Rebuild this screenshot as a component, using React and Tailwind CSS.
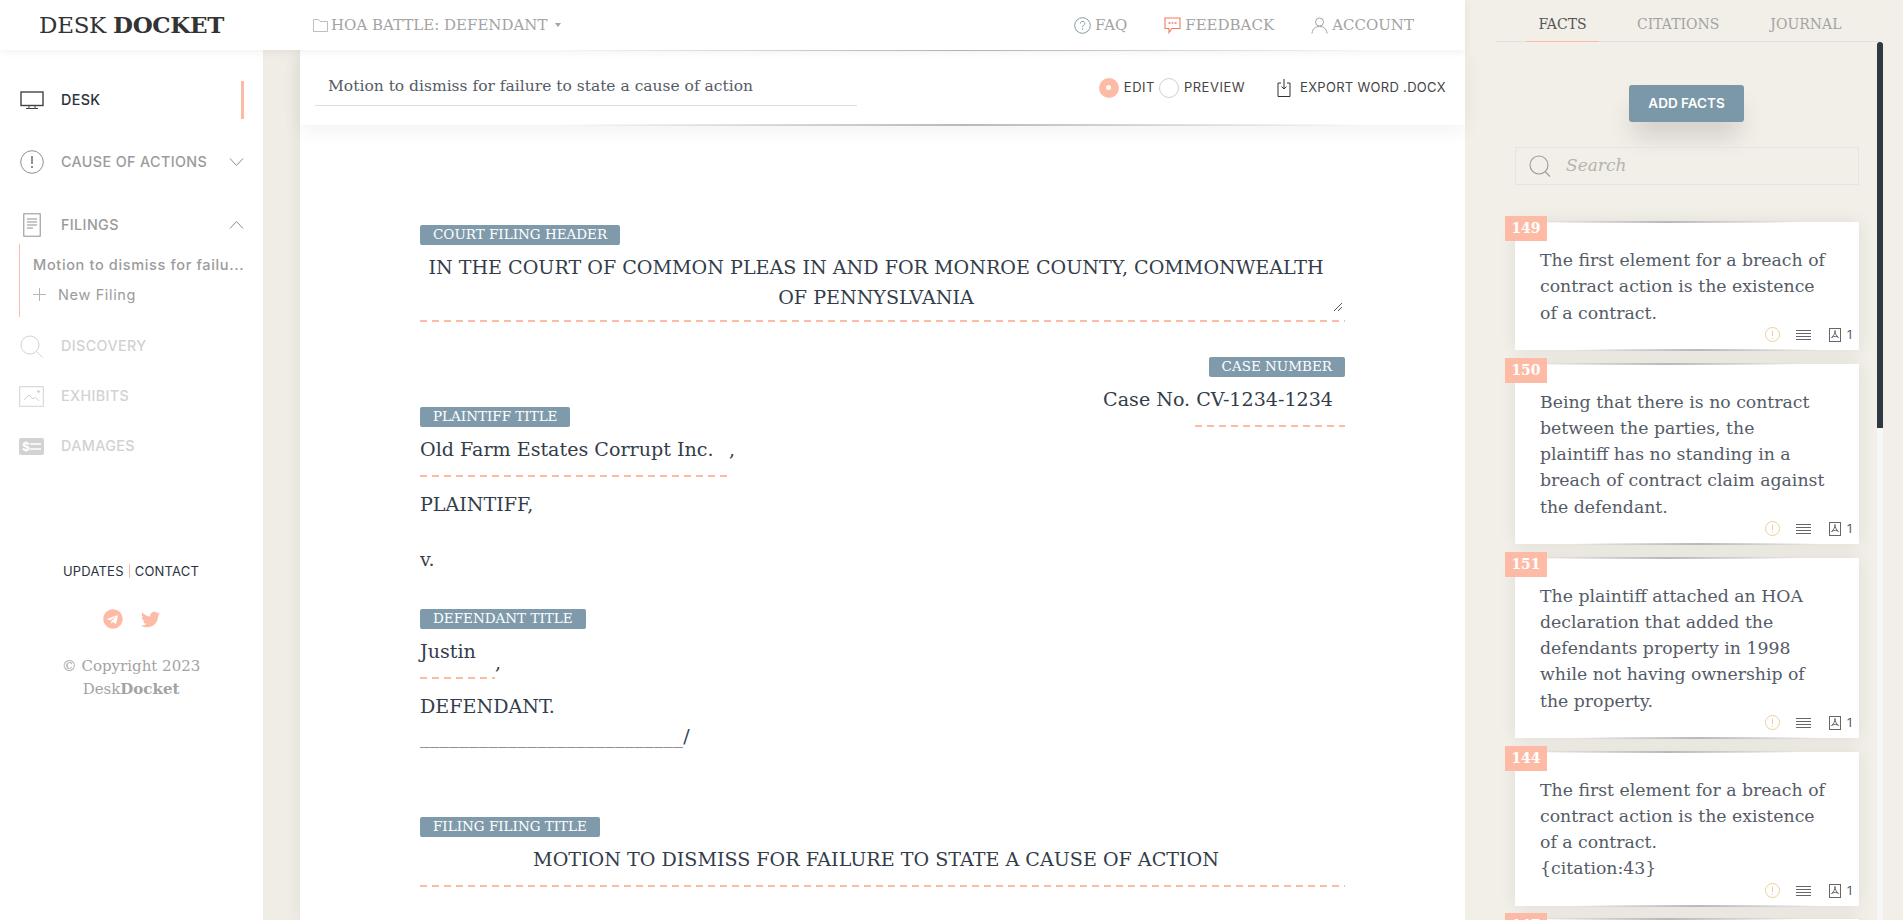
import React from 'react';
import { FaTelegram, FaTwitter } from 'react-icons/fa';

const serif = "font-['DejaVu_Serif',serif]";
const sans = "font-['Inter',sans-serif]";

const cards = [
  { id: 149, lines: ['The first element for a breach of', 'contract action is the existence', 'of a contract.'] },
  { id: 150, lines: ['Being that there is no contract', 'between the parties, the', 'plaintiff has no standing in a', 'breach of contract claim against', 'the defendant.'] },
  { id: 151, lines: ['The plaintiff attached an HOA', 'declaration that added the', 'defendants property in 1998', 'while not having ownership of', 'the property.'] },
  { id: 144, lines: ['The first element for a breach of', 'contract action is the existence', 'of a contract.', '{citation:43}'] },
  { id: 147, lines: [] },
];

function Dash({ className = '' }) {
  return <div className={`h-[2px] bg-[repeating-linear-gradient(90deg,#fdbba6_0,#fdbba6_7px,transparent_7px,transparent_12px)] ${className}`}></div>;
}

function Tag({ children }) {
  return (
    <div className={`flex h-[20px] w-fit items-center rounded-[2px] bg-[#7f9bab] px-[13px] text-[13.500px] leading-none text-white ${serif}`}>
      {children}
    </div>
  );
}

function GlowLine({ className = '' }) {
  return <div className={`absolute h-[2px] bg-gradient-to-r from-transparent via-[#b9b9b9] to-transparent ${className}`}></div>;
}

function NavRow({ icon, label, chevron, className = '', text = 'text-[#9b9b9b]', active }) {
  return (
    <div className={`relative flex shrink-0 items-center ${className}`}>
      <div className="flex w-[61px] justify-center pl-[2px]">{icon}</div>
      <span className={`text-[14.300px] font-medium tracking-[0.4px] ${text}`}>{label}</span>
      {chevron && (
        <svg className="absolute left-[229px] top-1/2 -translate-y-1/2" width="15" height="9" viewBox="0 0 15 9" fill="none" stroke="#8a8a8a" strokeWidth="1">
          <path d={chevron === 'up' ? 'M1 8l6.500-7L14 8' : 'M1 1l6.500 7L14 1'} />
        </svg>
      )}
      {active && <div className="absolute left-[241px] top-0 h-full w-[3px] bg-[#fdbba6]"></div>}
    </div>
  );
}

function Sidebar() {
  return (
    <aside className={`relative z-10 flex w-[263px] shrink-0 flex-col bg-white ${sans}`}>
      <NavRow
        className="mt-[31px] h-[38px]"
        text="text-[#2c3340]"
        label="DESK"
        active
        icon={
          <svg width="24" height="19" viewBox="0 0 24 19" fill="none" stroke="#444" strokeWidth="1.400">
            <rect x="1" y="1" width="22" height="13.500" />
            <path d="M6 17.500h12M9 15v2M15 15v2" strokeWidth="1" />
          </svg>
        }
      />
      <NavRow
        className="mt-[31px] h-[24px]"
        label="CAUSE OF ACTIONS"
        chevron="down"
        icon={
          <svg width="24" height="24" viewBox="0 0 24 24" fill="none" stroke="#8f8f8f" strokeWidth="1">
            <circle cx="12" cy="12" r="11.300" />
            <path d="M12 6v8" strokeWidth="2" />
            <path d="M12 16v2" strokeWidth="2" />
          </svg>
        }
      />
      <NavRow
        className="mt-[39px] h-[24px]"
        label="FILINGS"
        chevron="up"
        icon={
          <svg width="18" height="24" viewBox="0 0 18 24" fill="none" stroke="#8f8f8f" strokeWidth="1">
            <rect x="0.800" y="0.800" width="16.400" height="22.400" />
            <path d="M4 6h10M4 9h10M4 12h10M4 15h6" />
          </svg>
        }
      />
      <div className="ml-[19px] mt-[7px] flex h-[73px] shrink-0 flex-col border-l border-[#fdbba6] pl-[13px] text-[14.500px] font-medium tracking-[0.65px] text-[#9b9b9b]">
        <div className="mt-[11px] h-[20px] w-[211px] overflow-hidden whitespace-nowrap leading-[20px]">Motion to dismiss for failu...</div>
        <div className="mt-[9px] flex items-center font-normal">
          <svg width="13" height="13" viewBox="0 0 13 13" fill="none" stroke="#b5b5b5" strokeWidth="1" className="mr-[12px]">
            <path d="M6.500 0v13M0 6.500h13" />
          </svg>
          New Filing
        </div>
      </div>
      <NavRow
        className="mt-[17px] h-[24px]"
        text="text-[#d2d2d2]"
        label="DISCOVERY"
        icon={
          <svg width="23" height="23" viewBox="0 0 23 23" fill="none" stroke="#d2d2d2" strokeWidth="1">
            <circle cx="10" cy="10" r="9" />
            <path d="M16.500 16.500l6 6" />
          </svg>
        }
      />
      <NavRow
        className="mt-[26px] h-[24px]"
        text="text-[#d2d2d2]"
        label="EXHIBITS"
        icon={
          <svg width="25" height="21" viewBox="0 0 25 21" fill="none" stroke="#d2d2d2" strokeWidth="1">
            <rect x="0.700" y="0.700" width="23.600" height="19.600" />
            <path d="M5 14l5-5 4 4 2-2 4 4" />
            <circle cx="19.500" cy="5.500" r="1" fill="#d2d2d2" />
          </svg>
        }
      />
      <NavRow
        className="mt-[26px] h-[24px]"
        text="text-[#d2d2d2]"
        label="DAMAGES"
        icon={
          <svg width="25" height="17" viewBox="0 0 25 17">
            <rect width="25" height="17" rx="2" fill="#d2d2d2" />
            <path d="M11 6h11M11 11h11" stroke="#fff" strokeWidth="1.400" />
            <text x="3" y="13" fontSize="12" fontWeight="700" fill="#fff" fontFamily="Inter">$</text>
          </svg>
        }
      />
      <div className="mt-[105px] flex flex-col items-center pr-[1px]">
        <div className="flex items-center text-[13px] leading-[16px] tracking-[0.2px] text-[#2c3340]">
          UPDATES<span className="mx-[5px] h-[14px] w-px bg-[#fdbba6]"></span>CONTACT
        </div>
        <div className="mt-[30px] flex items-center gap-[18px] text-[#fdbba6]">
          <FaTelegram size={20} />
          <FaTwitter size={19} />
        </div>
        <div className={`mt-[26px] text-center text-[15px] leading-[23px] text-[#a3a3a3] ${serif}`}>
          © Copyright 2023
          <br />
          Desk<b>Docket</b>
        </div>
      </div>
    </aside>
  );
}

function Header() {
  const nav = 'flex items-center text-[15px] text-[#a3a3a3]';
  return (
    <header className={`relative z-20 flex h-[50px] shrink-0 items-center bg-white shadow-[0_2px_8px_rgba(0,0,0,0.06)] ${serif}`}>
      <div className="ml-[39px] w-[274px] text-[23px] leading-none tracking-[-0.3px] text-[#333]">
        DESK <b>DOCKET</b>
      </div>
      <div className={nav}>
        <svg width="15" height="13" viewBox="0 0 15 13" fill="none" stroke="#bdbdbd" strokeWidth="1" className="mr-[3px]">
          <path d="M.5 12.500V.5h5l1.500 2h7.500v10z" />
        </svg>
        HOA BATTLE: DEFENDANT
        <div className="ml-[8px] h-0 w-0 border-x-[3.500px] border-t-[4px] border-x-transparent border-t-[#a3a3a3]"></div>
      </div>
      <div className="ml-auto mr-[51px] flex items-center gap-[37px]">
        <div className={nav}>
          <svg width="17" height="17" viewBox="0 0 17 17" fill="none" stroke="#7f9bab" strokeWidth="1" className="mr-[4px]">
            <circle cx="8.500" cy="8.500" r="7.800" />
            <path d="M6.300 6.600c0-3 4.500-3 4.500-.2 0 1.800-2.300 1.800-2.300 3.800M8.500 11.500v1.300" />
          </svg>
          FAQ
        </div>
        <div className={nav}>
          <svg width="17" height="17" viewBox="0 0 17 17" fill="none" stroke="#f4785a" strokeWidth="1.100" className="mr-[4px]">
            <path d="M1 1h15v10.500H8l-3 4v-4H1z" />
            <path d="M4.500 6h2M7.700 6h1.600M10.500 6h2" strokeWidth="1.500" />
          </svg>
          FEEDBACK
        </div>
        <div className={nav}>
          <svg width="17" height="17" viewBox="0 0 17 17" fill="none" stroke="#a3a3a3" strokeWidth="1" className="mr-[4px]">
            <circle cx="8.500" cy="5" r="4" />
            <path d="M1 16.500c.5-5 3.500-7 7.500-7s7 2 7.500 7" />
          </svg>
          ACCOUNT
        </div>
      </div>
    </header>
  );
}

function SubHeader() {
  return (
    <div className="relative z-10 flex h-[75px] shrink-0 items-center bg-white shadow-[0_5px_20px_rgba(0,0,0,0.06)]">
      <GlowLine className="left-[260px] right-[100px] top-[-1px]" />
      <GlowLine className="bottom-[-1px] left-[260px] right-[100px]" />
      <div className={`ml-[15px] flex h-[36px] w-[542px] items-center border-b border-[#dedede] pl-[13px] text-[15.500px] text-[#555b66] ${serif}`}>
        Motion to dismiss for failure to state a cause of action
      </div>
      <div className={`ml-auto mr-[19px] flex items-center text-[13px] tracking-[0.5px] text-[#444] ${sans}`}>
        <div className="flex h-[20px] w-[20px] items-center justify-center rounded-full bg-[#fdbba6]">
          <div className="h-[5px] w-[5px] rounded-full bg-white"></div>
        </div>
        <span className="ml-[5px]">EDIT</span>
        <div className="ml-[4px] h-[20px] w-[20px] rounded-full border border-[#cfcfcf]"></div>
        <span className="ml-[5px]">PREVIEW</span>
        <svg width="14" height="18" viewBox="0 0 14 18" fill="none" stroke="#333" strokeWidth="1" className="ml-[32px] mr-[9px]">
          <path d="M4 4H1v13.500h12V4h-3M7 0v10M4.500 7.500L7 10l2.500-2.500" />
        </svg>
        <span className="tracking-[0.3px]">EXPORT WORD .DOCX</span>
      </div>
    </div>
  );
}

function Doc() {
  const text = `text-[19.100px] leading-[30px] text-[#333d4a] ${serif}`;
  return (
    <div className="flex min-h-0 flex-1 flex-col bg-white shadow-[0_0_16px_rgba(0,0,0,0.07)]">
      <SubHeader />
      <div className="flex-1 overflow-hidden px-[120px] pt-[100px]">
        <Tag>COURT FILING HEADER</Tag>
        <div className="relative">
          <div className={`mt-[8px] pr-[13px] text-center ${text}`}>
            IN THE COURT OF COMMON PLEAS IN AND FOR MONROE COUNTY, COMMONWEALTH
            <br />
            OF PENNYSLVANIA
          </div>
          <svg width="10" height="10" viewBox="0 0 10 10" fill="none" stroke="#555" strokeWidth="1" className="absolute bottom-[1px] right-[2px]">
            <path d="M1 9l8-8M5 9l4-4" />
          </svg>
        </div>
        <Dash className="mt-[7px]" />

        <div className="mt-[35px] flex items-start justify-between">
          <div className="pt-[50px]">
            <Tag>PLAINTIFF TITLE</Tag>
            <div className="mt-[8px] flex items-start">
              <div className="w-[309px]">
                <div className={`whitespace-nowrap ${text}`}>Old Farm Estates Corrupt Inc.</div>
                <Dash className="mt-[10px]" />
              </div>
              <span className={text}>,</span>
            </div>
            <div className={`mt-[13px] ${text}`}>PLAINTIFF,</div>
            <div className={`mt-[25px] ${text}`}>v.</div>
            <div className="mt-[34px]">
              <Tag>DEFENDANT TITLE</Tag>
            </div>
            <div className="mt-[8px] flex items-start">
              <div className="w-[75px]">
                <div className={text}>Justin</div>
                <Dash className="mt-[10px]" />
              </div>
              <span className={`mt-[11px] ${text}`}>,</span>
            </div>
            <div className={`mt-[13px] ${text}`}>DEFENDANT.</div>
            <div className={`whitespace-nowrap tracking-[0.2px] ${text}`}>___________________________/</div>
          </div>
          <div className="flex flex-col items-end">
            <Tag>CASE NUMBER</Tag>
            <div className={`mt-[8px] pr-[12px] ${text}`}>Case No. CV-1234-1234</div>
            <Dash className="mt-[10px] w-[150px]" />
          </div>
        </div>

        <div className="mt-[65px]">
          <Tag>FILING FILING TITLE</Tag>
        </div>
        <div className={`mt-[8px] pr-[13px] text-center ${text}`}>MOTION TO DISMISS FOR FAILURE TO STATE A CAUSE OF ACTION</div>
        <Dash className="mt-[10px]" />
      </div>
    </div>
  );
}

function FactCard({ id, lines }) {
  return (
    <div className="relative mb-[13.750px] w-[344px] bg-white pb-[24px] pl-[25px] pt-[25px] shadow-[0_0_16px_rgba(0,0,0,0.08)]">
      <GlowLine className="left-[20px] right-[60px] top-[-1px]" />
      <GlowLine className="bottom-[-1px] left-[60px] right-[40px]" />
      <div className={`absolute left-[-10px] top-[-6px] flex h-[25px] w-[42px] items-center justify-center bg-[#fdbba6] text-[14px] font-bold text-white ${serif}`}>
        {id}
      </div>
      <div className={`text-[17.300px] leading-[26.250px] text-[#555b66] ${serif}`}>
        {lines.map((line) => (
          <div key={line} className="whitespace-nowrap">{line}</div>
        ))}
      </div>
      {lines.length > 0 && (
        <div className={`absolute bottom-[6px] left-[250px] flex items-center text-[12px] text-[#555b66] ${sans}`}>
          <svg width="15" height="15" viewBox="0 0 15 15" fill="none" stroke="#edcf9f" strokeWidth="1">
            <circle cx="7.500" cy="7.500" r="7" />
            <path d="M7.500 3.500v5.500M7.500 10.500v1.200" />
          </svg>
          <svg width="15" height="10" viewBox="0 0 15 10" fill="none" stroke="#666" strokeWidth="1" className="ml-[16px]">
            <path d="M0 .5h15M0 3.500h15M0 6.500h15M0 9.500h15" />
          </svg>
          <svg width="12" height="14" viewBox="0 0 12 14" fill="none" stroke="#666" strokeWidth="1" className="ml-[18px]">
            <rect x=".5" y=".5" width="11" height="13" />
            <path d="M6 2.500c0 3-1 5-3.500 7 3-1.500 5-1.500 7 0-2-1.500-3.500-4-3.500-7z" />
          </svg>
          <span className="ml-[6px]">1</span>
        </div>
      )}
    </div>
  );
}

function FactsPanel() {
  return (
    <aside className="relative flex w-[438px] shrink-0 flex-col overflow-hidden bg-[#f2efe9]">
      <div className={`ml-[31px] flex h-[42px] w-[384px] shrink-0 border-b border-[#e3e1dd] pt-[14px] text-[14px] text-[#a3a3a3] ${serif}`}>
        <div className="-mb-px ml-[30px] flex h-[28px] w-[73px] justify-center border-b border-[#fdbba6] text-[#555]">FACTS</div>
        <div className="ml-[38px]">CITATIONS</div>
        <div className="ml-[51px]">JOURNAL</div>
      </div>
      <button className={`ml-[164px] mt-[43px] h-[37px] w-[115px] shrink-0 rounded-[3px] bg-[#7b98a8] text-[13.500px] font-semibold text-white shadow-[0_18px_26px_-4px_rgba(0,0,0,0.14)] ${sans}`}>
        ADD FACTS
      </button>
      <div className="ml-[50px] mt-[25px] flex h-[38px] w-[344px] shrink-0 items-center border border-[#e6e4e0] pl-[13px]">
        <svg width="22" height="22" viewBox="0 0 22 22" fill="none" stroke="#999" strokeWidth="1.100">
          <circle cx="10" cy="10" r="9" />
          <path d="M16 16.500l5 5" />
        </svg>
        <span className={`ml-[15px] text-[17px] italic text-[#b5b3ad] ${serif}`}>Search</span>
      </div>
      <div className="ml-[50px] mt-[37px]">
        {cards.map((c) => (
          <FactCard key={c.id} id={c.id} lines={c.lines} />
        ))}
      </div>
      {/* scrollbar */}
      <div className="absolute bottom-0 left-[412px] top-[42px] w-[6px] bg-[#f6f6f6]">
        <div className="h-[386px] w-full rounded-t-[3px] bg-[#2f3742]"></div>
      </div>
    </aside>
  );
}

export default function App() {
  return (
    <div className="flex h-screen overflow-hidden bg-[#f0ede6]">
      <div className="flex min-w-0 flex-1 flex-col">
        <Header />
        <div className="flex min-h-0 flex-1">
          <Sidebar />
          <main className="flex min-w-0 flex-1 flex-col pl-[37px]">
            <Doc />
          </main>
        </div>
      </div>
      <FactsPanel />
    </div>
  );
}
